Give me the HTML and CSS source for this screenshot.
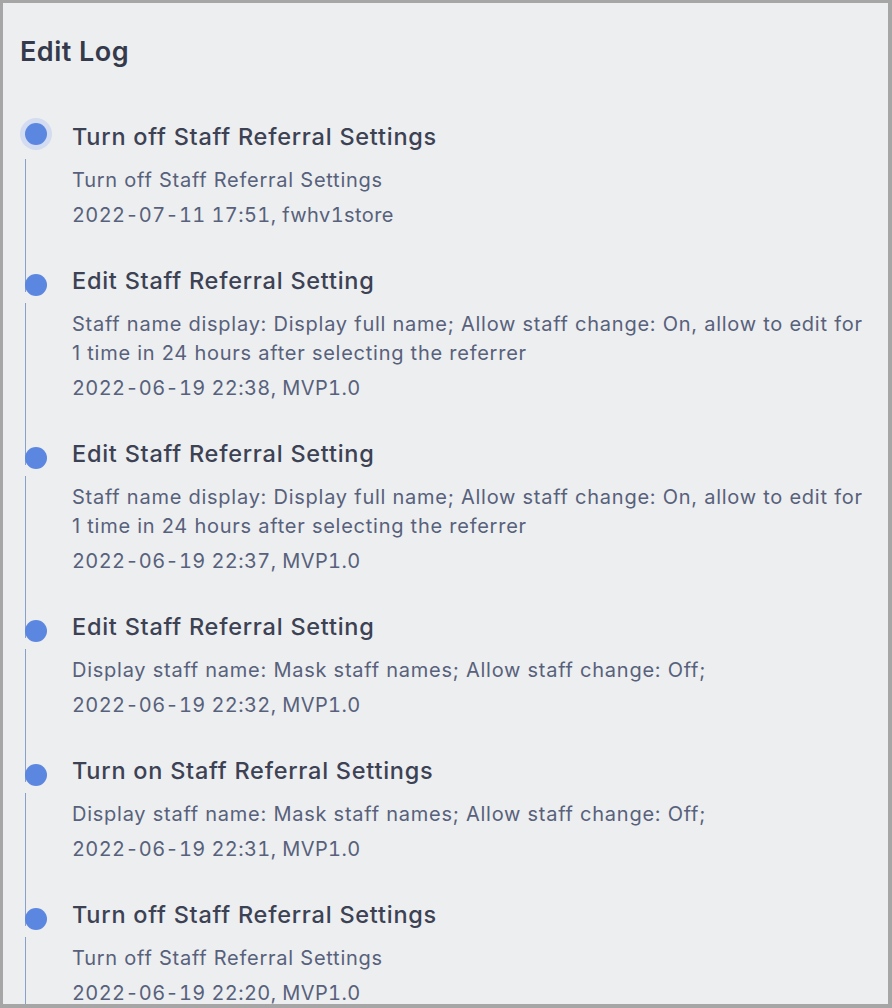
FILE: index.html
```html
<!DOCTYPE html>
<html>

<head>
    <title>Edit Log</title>
    <link rel="stylesheet" href="styles.css">
</head>

<body>
    <div class="panel">
        <h1 class="panel-title">Edit Log</h1>

        <ul class="log">
            <li class="log-item">
                <div class="rail">
                    <span class="dot dot-active"></span>
                    <span class="rail-line"></span>
                </div>
                <div class="log-body">
                    <div class="log-title">Turn off Staff Referral Settings</div>
                    <div class="log-desc">Turn off Staff Referral Settings</div>
                    <div class="log-meta">2022-07-11 17:51, fwhv1store</div>
                </div>
            </li>
            <li class="log-item">
                <div class="rail">
                    <span class="dot"></span>
                    <span class="rail-line"></span>
                </div>
                <div class="log-body">
                    <div class="log-title">Edit Staff Referral Setting</div>
                    <div class="log-desc">Staff name display: Display full name; Allow staff change: On, allow to edit for 1 time in 24 hours after selecting the referrer</div>
                    <div class="log-meta">2022-06-19 22:38, MVP1.0</div>
                </div>
            </li>
            <li class="log-item">
                <div class="rail">
                    <span class="dot"></span>
                    <span class="rail-line"></span>
                </div>
                <div class="log-body">
                    <div class="log-title">Edit Staff Referral Setting</div>
                    <div class="log-desc">Staff name display: Display full name; Allow staff change: On, allow to edit for 1 time in 24 hours after selecting the referrer</div>
                    <div class="log-meta">2022-06-19 22:37, MVP1.0</div>
                </div>
            </li>
            <li class="log-item">
                <div class="rail">
                    <span class="dot"></span>
                    <span class="rail-line"></span>
                </div>
                <div class="log-body">
                    <div class="log-title">Edit Staff Referral Setting</div>
                    <div class="log-desc">Display staff name: Mask staff names; Allow staff change: Off;</div>
                    <div class="log-meta">2022-06-19 22:32, MVP1.0</div>
                </div>
            </li>
            <li class="log-item">
                <div class="rail">
                    <span class="dot"></span>
                    <span class="rail-line"></span>
                </div>
                <div class="log-body">
                    <div class="log-title">Turn on Staff Referral Settings</div>
                    <div class="log-desc">Display staff name: Mask staff names; Allow staff change: Off;</div>
                    <div class="log-meta">2022-06-19 22:31, MVP1.0</div>
                </div>
            </li>
            <li class="log-item">
                <div class="rail">
                    <span class="dot"></span>
                    <span class="rail-line"></span>
                </div>
                <div class="log-body">
                    <div class="log-title">Turn off Staff Referral Settings</div>
                    <div class="log-desc">Turn off Staff Referral Settings</div>
                    <div class="log-meta">2022-06-19 22:20, MVP1.0</div>
                </div>
            </li>
        </ul>
    </div>
</body>

</html>
```

FILE: styles.css
```css
html,
body {
    height: 100%;
}

body {
    margin: 0;
    padding: 3px 4px 4px 3px;
    box-sizing: border-box;
    background-color: #a6a6a7;
    font-family: Inter, "Noto Sans", Arial, sans-serif;
    overflow: hidden;
}

.panel {
    height: 100%;
    background-color: #edeef0;
    padding: 0 17px;
    overflow: hidden;
}

.panel-title {
    margin: 0;
    padding-top: 33px;
    font-size: 27px;
    line-height: 32px;
    font-weight: 600;
    letter-spacing: 0.5px;
    color: #343a4b;
}

.log {
    list-style: none;
    margin: 54px 0 0;
    padding: 0;
}

.log-item {
    display: flex;
    padding-bottom: 36px;
    position: relative;
}

.rail {
    width: 52px;
    padding-left: 5px;
    box-sizing: border-box;
    display: flex;
    flex-direction: column;
    position: absolute;
    top: 0;
    bottom: 0;
    left: 0;
}

.dot {
    display: block;
    width: 22px;
    height: 22px;
    margin-top: 8px;
    border-radius: 50%;
    background-color: #5c87e0;
}

.dot-active {
    margin-top: 1px;
    margin-bottom: 7px;
    box-shadow: 0 0 0 5px #d3dcf0;
}

.rail-line {
    flex: 1;
    width: 1px;
    margin-top: 7px;
    margin-bottom: -26px;
    background-color: #8a9fcc;
}

.log-body {
    margin-left: 52px;
}

.log-title {
    font-size: 23.5px;
    line-height: 30px;
    font-weight: 500;
    letter-spacing: 0.75px;
    color: #3c4253;
    margin-bottom: 14px;
}

.log-desc,
.log-meta {
    font-size: 20px;
    line-height: 29px;
    letter-spacing: 0.75px;
    color: #57617b;
}

.log-meta {
    margin-top: 6px;
    letter-spacing: 0.4px;
    font-variant-numeric: tabular-nums;
}
```
